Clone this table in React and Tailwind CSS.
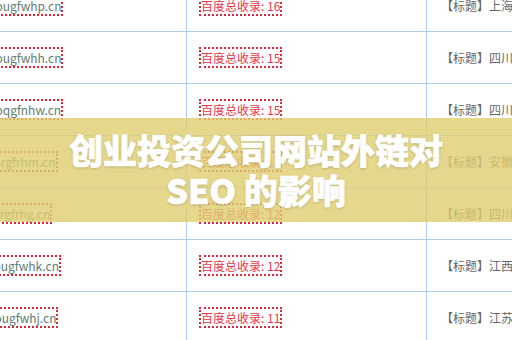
const ROWS = [
  { domain: 'bougfwhp.cn', shift: -14, count: 16, title: '上海创业投资公司' },
  { domain: 'bougfwhh.cn', shift: -14, count: 15, title: '四川创业投资公司' },
  { domain: 'boqgfnhw.cn', shift: -14, count: 15, title: '四川创业投资公司' },
  { domain: 'borgfrhm.cn', shift: -16, count: 13, title: '安徽创业投资公司' },
  { domain: 'borgfrhg.cn', shift: -17, count: 12, title: '四川创业投资公司' },
  { domain: 'bougfwhk.cn', shift: -16, count: 12, title: '江西创业投资公司' },
  { domain: 'bougfwhj.cn', shift: -15, count: 11, title: '江苏创业投资公司' },
]

function Row({ domain, shift, count, title }) {
  return (
    <div className="grid grid-cols-[187px_240px_1fr] h-[52px] shrink-0 border-b border-[#aecbeb]">
      <div className="flex items-center overflow-hidden border-r border-[#aecbeb]">
        <span
          className="shrink-0 whitespace-nowrap border-2 border-dotted border-[#d42a40] text-[12px] leading-[17px] text-[#5e7d72]"
          style={{ marginLeft: shift }}
        >
          {domain}
        </span>
      </div>
      <div className="flex items-center pl-[12px] border-r border-[#aecbeb]">
        <span className="whitespace-nowrap border-2 border-dotted border-[#d42a40] text-[12px] leading-[17px] text-[#df3a4c]">
          百度总收录: {count}
        </span>
      </div>
      <div className="flex items-center pl-[14px] overflow-hidden whitespace-nowrap text-[12px] text-[#666666]">
        【标题】{title}
      </div>
    </div>
  )
}

export default function App() {
  return (
    <div className="relative w-[512px] h-[340px] overflow-hidden bg-white font-['Noto_Sans_CJK_SC','Noto_Sans',sans-serif]">
      <div className="-mt-[20px] flex flex-col">
        {ROWS.map(r => <Row key={r.domain} {...r} />)}
      </div>

      <div className="absolute left-0 right-0 top-[118px] h-[104px] bg-[rgba(222,205,111,0.8)] flex flex-col items-center justify-center text-white font-black text-[34px] leading-[40px] [-webkit-text-stroke:0.7px_white] [text-shadow:0_1px_3px_rgba(0,0,0,0.22)]">
        <span>创业投资公司网站外链对</span>
        <span>SEO 的影响</span>
      </div>
    </div>
  )
}
